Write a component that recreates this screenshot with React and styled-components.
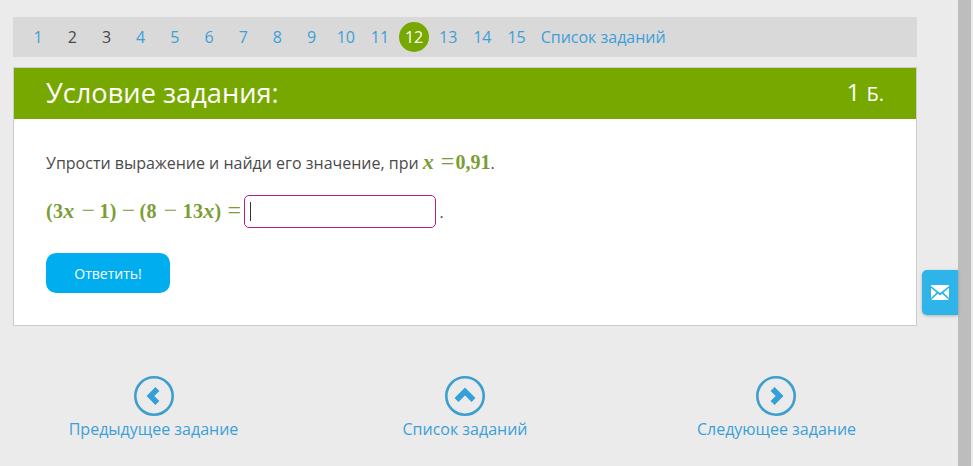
import React from "react";
import styled, { createGlobalStyle } from "styled-components";

const GlobalStyle = createGlobalStyle`
  html, body {
    margin: 0;
    padding: 0;
    height: 466px;
    overflow: hidden;
    background: #ebebeb;
    font-family: "Open Sans", "Noto Sans", sans-serif;
  }
`;

const Page = styled.div`
  position: relative;
  display: flex;
  width: 973px;
  height: 466px;
  overflow: hidden;
`;

const Content = styled.main`
  width: 958px;
  padding: 17px 0 0 13px;
  box-sizing: border-box;
`;

const Scrollbar = styled.div`
  width: 13px;
  background: #bdbdbd;
`;

const Pager = styled.nav`
  display: flex;
  align-items: center;
  width: 904px;
  height: 40px;
  padding-left: 8px;
  box-sizing: border-box;
  background: #d9d9d9;
  font-size: 16px;
`;

const PageLink = styled.a`
  width: 34.2px;
  text-align: center;
  color: ${(p) => (p.$done ? "#4a4a4a" : "#3d9fd8")};
`;

const CurrentPage = styled.span`
  display: flex;
  align-items: center;
  justify-content: center;
  width: 30px;
  height: 30px;
  margin: 0 2px;
  border-radius: 50%;
  background: #77a800;
  color: #fff;
  font-size: 16px;
`;

const ListLink = styled.a`
  margin-left: 7px;
  color: #3d9fd8;
`;

const Card = styled.section`
  width: 904px;
  height: 259px;
  margin-top: 10px;
  box-sizing: border-box;
  background: #fff;
  border: 1px solid #cccccc;
`;

const CardHeader = styled.header`
  display: flex;
  align-items: center;
  justify-content: space-between;
  height: 51px;
  padding: 0 32px 2px;
  box-sizing: border-box;
  background: #77a800;
  color: #fff;
  font-size: 27.2px;
  line-height: 49px;
`;

const Points = styled.span`
  font-size: 24px;
  small {
    font-size: 20px;
  }
`;

const CardBody = styled.div`
  padding: 31px 32px 0;
`;

const Task = styled.p`
  margin: 0;
  height: 22px;
  line-height: 22px;
  font-size: 16px;
  color: #4a4a4a;
`;

const MathText = styled.span`
  font-family: "Liberation Serif", "DejaVu Serif", serif;
  font-weight: 700;
  font-size: 20px;
  color: #7a9e35;
  i {
    font-style: italic;
    font-size: 22px;
  }
`;

const EquationMath = styled(MathText)`
  margin-top: -2px;
  letter-spacing: 0.3px;
`;

const MathOp = styled.span`
  margin: 0 ${(p) => p.$right}px 0 ${(p) => p.$left}px;
  font-size: 24px;
  font-weight: 400;
`;

const Equation = styled.div`
  display: flex;
  align-items: center;
  margin-top: 23px;
  height: 33px;
  font-size: 16px;
  color: #4a4a4a;
`;

const AnswerBox = styled.div`
  display: flex;
  align-items: center;
  width: 192px;
  height: 33px;
  margin: 0 3px 0 2px;
  padding-left: 5px;
  box-sizing: border-box;
  border: 1px solid #b01f8e;
  border-radius: 5px;
  background: #fff;
`;

const Caret = styled.span`
  width: 1px;
  height: 19px;
  background: #333;
`;

const AnswerButton = styled.button`
  display: block;
  width: 124px;
  height: 40px;
  margin-top: 25px;
  padding: 0;
  border: 0;
  border-radius: 10px;
  background: #00aeef;
  color: #fff;
  font-family: inherit;
  font-size: 14px;
`;

const BottomNav = styled.nav`
  display: grid;
  grid-template-columns: repeat(3, 200px);
  column-gap: 111.5px;
  justify-items: center;
  margin: 50px 0 0 40.5px;
`;

const NavItem = styled.a`
  display: flex;
  flex-direction: column;
  align-items: center;
  gap: 2px;
  color: #3d9fd8;
  font-size: 16px;
  line-height: 22px;
`;

const MailTab = styled.div`
  position: absolute;
  left: 922px;
  top: 270px;
  display: flex;
  align-items: center;
  justify-content: center;
  width: 36px;
  height: 45px;
  border-radius: 5px 0 0 5px;
  background: #2fb4ea;
  box-shadow: 0 1px 3px rgba(0, 0, 0, 0.25);
`;

function NavIcon({ points }) {
  return (
    <svg width="40" height="40" viewBox="0 0 40 40">
      <circle cx="20" cy="20" r="18.7" fill="none" stroke="#3d9fd0" strokeWidth="2.6" />
      <polyline points={points} fill="none" stroke="#33a0d8" strokeWidth="5.5" />
    </svg>
  );
}

const pages = [1, 2, 3, 4, 5, 6, 7, 8, 9, 10, 11];
const morePages = [13, 14, 15];

export default function App() {
  return (
    <Page>
      <GlobalStyle />
      <Content>
        <Pager>
          {pages.map((n) => (
            <PageLink key={n} $done={n === 2 || n === 3}>{n}</PageLink>
          ))}
          <CurrentPage>12</CurrentPage>
          {morePages.map((n) => (
            <PageLink key={n}>{n}</PageLink>
          ))}
          <ListLink>Список заданий</ListLink>
        </Pager>
        <Card>
          <CardHeader>
            <span>Условие задания:</span>
            <Points>1 <small>Б.</small></Points>
          </CardHeader>
          <CardBody>
            <Task>
              Упрости выражение и найди его значение, при{" "}
              <MathText><i>x</i><MathOp $left={7} $right={1}>=</MathOp>0,91</MathText>.
            </Task>
            <Equation>
              <EquationMath>
                (3<i>x</i><MathOp $left={7} $right={4}>−</MathOp>1)<MathOp $left={5} $right={4}>−</MathOp>(8<MathOp $left={7} $right={5}>−</MathOp>13<i>x</i>)<MathOp $left={6} $right={1}>=</MathOp>
              </EquationMath>
              <AnswerBox><Caret /></AnswerBox>
              .
            </Equation>
            <AnswerButton>Ответить!</AnswerButton>
          </CardBody>
        </Card>
        <BottomNav>
          <NavItem>
            <NavIcon points="23.4,13 16.4,20 23.4,27" />
            Предыдущее задание
          </NavItem>
          <NavItem>
            <NavIcon points="11.5,24 20,15.5 28.5,24" />
            Список заданий
          </NavItem>
          <NavItem>
            <NavIcon points="16.6,13 23.6,20 16.6,27" />
            Следующее задание
          </NavItem>
        </BottomNav>
      </Content>
      <Scrollbar />
      <MailTab>
        <svg width="18" height="15" viewBox="0 0 18 15">
          <path d="M0 1 L9 8 L18 1 V0 H0 Z M0 3 L5.5 7.5 L0 13 Z M18 3 L12.5 7.5 L18 13 Z M0 15 L6.8 8.8 L9 10.5 L11.2 8.8 L18 15 Z" fill="#fff" />
        </svg>
      </MailTab>
    </Page>
  );
}
